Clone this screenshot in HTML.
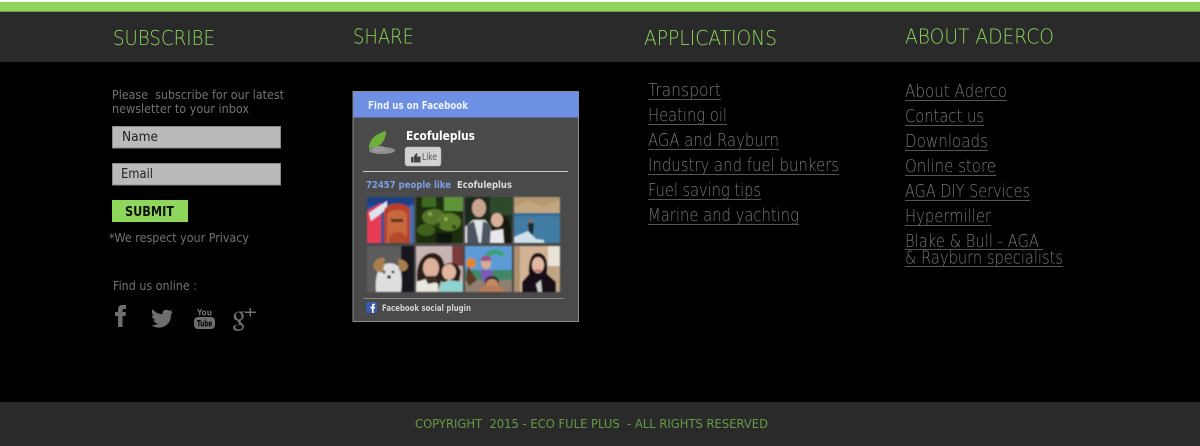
<!DOCTYPE html>
<html lang="en"><head><meta charset="utf-8"><title>Footer</title>
<style>
html,body{margin:0;padding:0;background:#000;width:1200px;height:446px;overflow:hidden}
svg{display:block}
text{font-family:"DejaVu Sans","Liberation Sans",sans-serif;white-space:pre}
.h{font-size:20.500px;fill:#8ad65a;font-weight:200}
.p{font-size:12.500px;fill:#727272}
.l{font-size:17.500px;fill:#767676;font-weight:200}
.u{fill:#555}
.b{font-weight:bold}
</style></head><body>
<svg width="1200" height="446" viewBox="0 0 1200 446" xmlns="http://www.w3.org/2000/svg">
<defs><filter id="bl" x="-5%" y="-5%" width="110%" height="110%"><feGaussianBlur stdDeviation="0.800"/></filter></defs>
<rect width="1200" height="446" fill="#000"/>
<rect width="1200" height="2" fill="#fff"/>
<rect y="2" width="1200" height="9" fill="#90d45c"/>
<rect y="11" width="1200" height="1" fill="#6fa048"/>
<rect y="12" width="1200" height="50" fill="#2a2a2a"/>
<rect y="402" width="1200" height="44" fill="#2a2a2a"/>

<text class="h" x="113" y="45" textLength="102" lengthAdjust="spacingAndGlyphs">SUBSCRIBE</text>
<text class="h" x="353" y="43.500" textLength="61" lengthAdjust="spacingAndGlyphs">SHARE</text>
<text class="h" x="644" y="45" textLength="133" lengthAdjust="spacingAndGlyphs">APPLICATIONS</text>
<text class="h" x="905" y="43.500" textLength="149" lengthAdjust="spacingAndGlyphs">ABOUT ADERCO</text>

<text class="p" x="112" y="99" textLength="172" lengthAdjust="spacingAndGlyphs">Please  subscribe for our latest</text>
<text class="p" x="112" y="113" textLength="137" lengthAdjust="spacingAndGlyphs">newsletter to your inbox</text>

<rect x="112.500" y="126.500" width="168" height="21.500" fill="#bababa" stroke="#8a8a8a"/>
<text x="122" y="141" font-size="13" fill="#222" textLength="36" lengthAdjust="spacingAndGlyphs">Name</text>
<rect x="112.500" y="163.500" width="168" height="21.500" fill="#bababa" stroke="#8a8a8a"/>
<text x="121" y="178" font-size="13" fill="#222" textLength="32" lengthAdjust="spacingAndGlyphs">Email</text>
<rect x="112" y="200" width="76" height="22" fill="#8fd65c"/>
<text class="b" x="125" y="216" font-size="13" fill="#101010" textLength="49" lengthAdjust="spacingAndGlyphs">SUBMIT</text>
<text class="p" x="109" y="242" textLength="140" lengthAdjust="spacingAndGlyphs">*We respect your Privacy</text>
<text class="p" x="113" y="290" textLength="84" lengthAdjust="spacingAndGlyphs">Find us online :</text>

<!-- social icons -->
<g fill="#6e6e6e">
<path d="M118 327V316H115V312H118V309.500C118 306.500 119.800 305 122.300 305H126V309H123.800C122.800 309 122.500 309.500 122.500 310.500V312H126L125.500 316H122.500V327Z"/>
<path d="M173 311.500C172.200 312 171.300 312.200 170.300 312.400C171.300 311.700 172 310.800 172.400 309.700C171.400 310.300 170.400 310.700 169.300 310.900C167.200 308.600 162.600 309.800 162.400 313C162.400 313.500 162.400 313.900 162.500 314.300C158.500 314.100 155 312.300 152.500 309.300C151.200 311.500 151.900 314.300 154 315.700C153.200 315.700 152.500 315.500 151.800 315.100C151.800 317.500 153.400 319.500 155.700 320C155 320.200 154.200 320.200 153.500 320.100C154.100 322 155.900 323.300 157.900 323.400C156 324.900 153.400 325.600 150.900 325.300C161 331.500 172 324.500 171 314C171.800 313.300 172.500 312.500 173 311.500Z"/>
<rect x="194" y="317" width="21" height="12" rx="4"/>
<path d="M233 327.500C233 325.500 235.500 324.500 238.500 324.500C240 323 237 322 237.500 320.500C235 320.500 233.800 318.800 233.800 316.500C233.800 313.500 236 311.500 239 311.500H245L243.600 312.500H241.800C243.200 313.500 243.800 314.800 243.800 316.300C243.800 319.500 240.600 319.800 240.600 321.500C240.600 323 244 323.800 244 326.800C244 329.300 241.500 331 238.300 331C235.300 331 233 329.800 233 327.500ZM235.300 326.800C235.300 328.500 236.800 329.500 238.800 329.500C240.800 329.500 242.200 328.500 242.200 327C242.200 325.500 240.500 324.900 239.300 324.900C237 324.900 235.300 325.500 235.300 326.800ZM236 315C236 317 237.300 319.500 239.200 319.500C240.700 319.500 241.500 318.300 241.500 316.800C241.500 314.800 240.300 312.400 238.300 312.400C236.800 312.400 236 313.500 236 315Z"/>
<path d="M249.500 308H251V311.500H256V313H251V316.500H249.500V313H245V311.500H249.500Z"/>
</g>
<text x="197" y="315.500" font-size="8.500" font-weight="bold" fill="#6e6e6e" textLength="15" lengthAdjust="spacingAndGlyphs">You</text>
<text x="197" y="326.500" font-size="9" font-weight="bold" fill="#000" textLength="15" lengthAdjust="spacingAndGlyphs">Tube</text>

<!-- facebook box -->
<rect x="353" y="91.500" width="225.500" height="230" fill="#4a4a4a" stroke="#8c8c8c"/>
<rect x="353.500" y="92" width="225" height="25.500" fill="#6d90e4"/>
<text class="b" x="368" y="109" font-size="10.500" fill="#eef2fc" textLength="100" lengthAdjust="spacingAndGlyphs">Find us on Facebook</text>
<ellipse cx="382" cy="150.500" rx="13" ry="3.500" fill="#8f8f8f"/>
<ellipse cx="379" cy="149" rx="7" ry="3" fill="#9a9a9a"/>
<path d="M369 148C369 140 375 134 386 131C386 140 381 147 372 147.500L369 149Z" fill="#6fb03c"/>
<text class="b" x="406" y="140" font-size="12.500" fill="#fff" textLength="69" lengthAdjust="spacingAndGlyphs">Ecofuleplus</text>
<rect x="405" y="147" width="36" height="19" rx="2.500" fill="#d2d2d2" stroke="#b0b0b0" stroke-width="0.500"/>
<path d="M411 157H413V162.500H411ZM413.500 157L416 153.500C417 152.800 417.600 153.500 417.200 155L416.800 156.500H420.500V162.500H413.500Z" fill="#444"/>
<text x="422" y="160" font-size="10" fill="#555" textLength="15" lengthAdjust="spacingAndGlyphs">Like</text>
<rect x="363" y="171" width="205" height="1" fill="#c8c8c8"/>
<text class="b" x="366" y="188" font-size="10" fill="#7f9fe2" textLength="85" lengthAdjust="spacingAndGlyphs">72457 people like</text>
<text class="b" x="457" y="188" font-size="10" fill="#dcdcdc" textLength="55" lengthAdjust="spacingAndGlyphs">Ecofuleplus</text>

<g filter="url(#bl)">
<!-- 1 -->
<svg x="367" y="197" width="47" height="46" viewBox="0 0 47 46">
<rect width="47" height="46" fill="#2a4f9a"/><rect width="47" height="8" fill="#1c3f86"/>
<path d="M0 14L14 6V46H0Z" fill="#e83a55"/><path d="M2 16L20 4V12L4 24Z" fill="#dfe4f0"/>
<path d="M17 46V14C18 6 36 3 43 12V46Z" fill="#b8412a"/><path d="M20 46V18C23 11 37 11 40 18V46Z" fill="#c8673e"/>
<rect x="24" y="22" width="12" height="3" fill="#55301f"/><path d="M22 40Q30 30 40 40V46H22Z" fill="#b5482c"/><path d="M43 8H47V46H43Z" fill="#3f6fb5"/>
</svg>
<!-- 2 -->
<svg x="416" y="197" width="47" height="46" viewBox="0 0 47 46">
<rect width="47" height="46" fill="#1c2e0c"/><rect x="28" y="0" width="19" height="14" fill="#5e9438"/><rect x="6" y="0" width="14" height="10" fill="#3c6a22"/>
<ellipse cx="18" cy="20" rx="12" ry="8" fill="#55762a"/><ellipse cx="33" cy="25" rx="12" ry="9" fill="#5a7e2a"/><ellipse cx="10" cy="33" rx="9" ry="6" fill="#43601f"/>
<circle cx="14" cy="17" r="2" fill="#8aa84a"/><circle cx="30" cy="22" r="2" fill="#92ae4c"/><circle cx="38" cy="30" r="2" fill="#2e4a14"/><circle cx="22" cy="28" r="2.500" fill="#2e4a14"/>
<rect x="20" y="36" width="16" height="10" fill="#0e1208"/>
</svg>
<!-- 3 -->
<svg x="465" y="197" width="47" height="46" viewBox="0 0 47 46">
<rect width="47" height="46" fill="#1f2c1a"/><rect x="25" y="0" width="22" height="18" fill="#2e4a2a"/>
<ellipse cx="14" cy="11" rx="7" ry="9" fill="#c9a590"/><path d="M0 30L8 23H20L26 30V46H0Z" fill="#dfe3e8"/><path d="M2 28L9 24L14 46H2Z" fill="#4d5560"/><path d="M26 28L18 24L16 46H25Z" fill="#4d5560"/>
<path d="M26 46V26C26 14 42 14 45 28L46 46Z" fill="#15120f"/><ellipse cx="32" cy="23" rx="6" ry="7" fill="#d9b09a"/><path d="M26 46V34L38 32L39 46Z" fill="#e8e8ea"/>
</svg>
<!-- 4 -->
<svg x="514" y="197" width="46" height="46" viewBox="0 0 46 46">
<rect width="46" height="17" fill="#c2a680"/><path d="M0 10L12 4L30 9L46 3V0H0Z" fill="#b4986f"/><rect y="16" width="46" height="30" fill="#3f7ba3"/><rect y="16" width="46" height="3" fill="#2f6c96"/>
<path d="M14 26H20L19 38H15Z" fill="#1d2a33"/><circle cx="16.500" cy="24" r="2" fill="#8a6a55"/><path d="M0 40L14 34L22 42L30 43V46H0Z" fill="#cfe0ea"/>
</svg>
<!-- 5 -->
<svg x="367" y="246" width="47" height="46" viewBox="0 0 47 46">
<rect width="47" height="46" fill="#5c5c5c"/><rect x="34" width="13" height="46" fill="#15171f"/>
<path d="M9 46C8 34 10 24 14 20C20 16 28 16 33 22C35 30 35 38 34 46Z" fill="#dedede"/>
<path d="M6 20C8 12 15 10 18 13L16 26C11 27 7 24 6 20ZM31 13C36 13 41 16 41 21C39 26 34 26 32 24Z" fill="#a87e50"/>
<circle cx="17" cy="26" r="1.400" fill="#222"/><circle cx="26" cy="26" r="1.400" fill="#222"/><circle cx="22" cy="31" r="1.800" fill="#222"/>
</svg>
<!-- 6 -->
<svg x="416" y="246" width="47" height="46" viewBox="0 0 47 46">
<rect width="47" height="46" fill="#c9b4b4"/><rect x="36" width="11" height="20" fill="#7c3a3a"/>
<path d="M1 32C0 14 10 6 18 7C28 9 30 20 27 30L22 44H1Z" fill="#2b1d18"/><ellipse cx="15" cy="22" rx="8" ry="10" fill="#ddb09a"/>
<path d="M0 46V36L13 32L22 38V46Z" fill="#e9e6dd"/><path d="M8 30H20L22 36L12 38Z" fill="#3a2a26"/>
<path d="M24 28C24 14 42 13 45 26L43 36H26Z" fill="#2c1c16"/><ellipse cx="33" cy="26" rx="7" ry="8" fill="#e2b59e"/><path d="M24 46V38L33 34L47 36V46Z" fill="#8fd2d0"/>
</svg>
<!-- 7 -->
<svg x="465" y="246" width="47" height="46" viewBox="0 0 47 46">
<rect width="47" height="24" fill="#5d9bd6"/><rect y="24" width="47" height="10" fill="#3f8868"/><rect y="34" width="47" height="12" fill="#8e7f70"/>
<path d="M20 8Q30 -1 40 8L36 11Q30 5 24 11Z" fill="#3aa072"/><circle cx="6" cy="17" r="5" fill="#e0862c"/><path d="M3 20L12 34L4 40L1 34Z" fill="#5c3a28"/>
<ellipse cx="21" cy="17" rx="5" ry="6" fill="#dcaa90"/><path d="M16 12Q21 7 26 12V15H16Z" fill="#9a4f8a"/><path d="M15 24H28L27 36H18Z" fill="#7c58b8"/>
<ellipse cx="27" cy="36" rx="7" ry="6" fill="#3a2a20"/><ellipse cx="27" cy="38" rx="6" ry="5" fill="#c48a68"/><path d="M11 46L18 40H36L40 46Z" fill="#b97a58"/>
</svg>
<!-- 8 -->
<svg x="514" y="246" width="46" height="46" viewBox="0 0 46 46">
<rect width="46" height="46" fill="#d2b494"/><rect width="6" height="46" fill="#b08f6e"/><rect x="34" width="12" height="20" fill="#e8e2d6"/><rect x="34" y="20" width="12" height="26" fill="#c0a585"/>
<path d="M8 46V36L15 28C14 14 18 6 25 7C33 8 34 18 33 28L42 36V46Z" fill="#121012"/>
<ellipse cx="24" cy="19" rx="6" ry="8" fill="#e2b8a4"/><rect x="21" y="24" width="6" height="1.500" fill="#b02a35"/><path d="M22 38L27 34L28 46H24Z" fill="#cfcfcf"/>
</svg>
</g>

<rect x="364" y="298" width="200" height="1" fill="#8a8a8a"/>
<rect x="366" y="302" width="11" height="11" rx="1" fill="#3b5aa8"/>
<path d="M372 313V308.500H370.500V306.800H372V305.500C372 304 373 303.500 375 303.700V305.200H374.200C373.700 305.200 373.600 305.500 373.600 306V306.800H375L374.800 308.500H373.600V313Z" fill="#fff"/>
<text class="b" x="382" y="311" font-size="8.500" fill="#d0d0d0" textLength="89" lengthAdjust="spacingAndGlyphs">Facebook social plugin</text>

<!-- applications -->
<text class="l" x="648" y="96" textLength="73" lengthAdjust="spacingAndGlyphs">Transport</text><rect class="u" x="648" y="99" width="73" height="1"/>
<text class="l" x="648" y="121" textLength="79" lengthAdjust="spacingAndGlyphs">Heating oil</text><rect class="u" x="648" y="124" width="79" height="1"/>
<text class="l" x="648" y="146" textLength="131" lengthAdjust="spacingAndGlyphs">AGA and Rayburn</text><rect class="u" x="648" y="149" width="131" height="1"/>
<text class="l" x="648" y="171" textLength="191" lengthAdjust="spacingAndGlyphs">Industry and fuel bunkers</text><rect class="u" x="648" y="174" width="191" height="1"/>
<text class="l" x="648" y="196" textLength="113" lengthAdjust="spacingAndGlyphs">Fuel saving tips</text><rect class="u" x="648" y="199" width="113" height="1"/>
<text class="l" x="648" y="221" textLength="151" lengthAdjust="spacingAndGlyphs">Marine and yachting</text><rect class="u" x="648" y="224" width="151" height="1"/>

<!-- about -->
<text class="l" x="905" y="97" textLength="102" lengthAdjust="spacingAndGlyphs">About Aderco</text><rect class="u" x="905" y="100" width="102" height="1"/>
<text class="l" x="905" y="122" textLength="79" lengthAdjust="spacingAndGlyphs">Contact us</text><rect class="u" x="905" y="125" width="79" height="1"/>
<text class="l" x="905" y="147" textLength="83" lengthAdjust="spacingAndGlyphs">Downloads</text><rect class="u" x="905" y="150" width="83" height="1"/>
<text class="l" x="905" y="172" textLength="91" lengthAdjust="spacingAndGlyphs">Online store</text><rect class="u" x="905" y="175" width="91" height="1"/>
<text class="l" x="905" y="197" textLength="125" lengthAdjust="spacingAndGlyphs">AGA DIY Services</text><rect class="u" x="905" y="200" width="125" height="1"/>
<text class="l" x="905" y="222" textLength="86" lengthAdjust="spacingAndGlyphs">Hypermiller</text><rect class="u" x="905" y="225" width="86" height="1"/>
<text class="l" x="905" y="247" textLength="134" lengthAdjust="spacingAndGlyphs">Blake &amp; Bull - AGA</text><rect class="u" x="905" y="249" width="138" height="1"/>
<text class="l" x="905" y="263.500" textLength="158" lengthAdjust="spacingAndGlyphs">&amp; Rayburn specialists</text><rect class="u" x="905" y="266" width="158" height="1"/>

<text x="415" y="428" font-size="12.500" fill="#659a44" textLength="353" lengthAdjust="spacingAndGlyphs">COPYRIGHT  2015 - ECO FULE PLUS  - ALL RIGHTS RESERVED</text>
</svg>
</body></html>
